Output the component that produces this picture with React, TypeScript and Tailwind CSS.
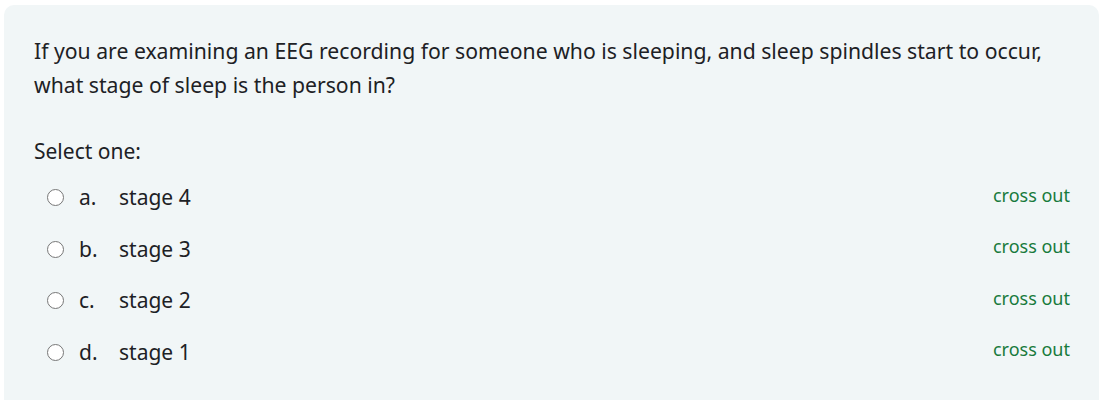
import React from "react";

const options = [
  { letter: "a.", text: "stage 4" },
  { letter: "b.", text: "stage 3" },
  { letter: "c.", text: "stage 2" },
  { letter: "d.", text: "stage 1" },
];

export default function App() {
  return (
    <div
      className="w-[1101px] h-[400px] overflow-hidden bg-white pt-[5px] pl-[4px] pr-[2px]"
      style={{ fontFamily: '"Noto Sans", "Open Sans", sans-serif' }}
    >
      <div className="bg-[#f1f6f7] rounded-[10px] px-[30px] pt-[29px] pb-[40px] text-[#1d2125]">
        <p className="text-[21.2px] leading-[34px]">
          If you are examining an EEG recording for someone who is sleeping, and sleep spindles start to occur,
          <br />
          what stage of sleep is the person in?
        </p>
        <p className="mt-[32px] text-[21px] leading-[34px]">Select one:</p>
        <div className="mt-[4px] flex flex-col">
          {options.map((o) => (
            <div key={o.letter} className="flex items-center h-[51.5px]">
              <span className="ml-[13px] w-[17px] h-[17px] rounded-full border-[1.5px] border-[#777777] bg-white shrink-0" />
              <span className="ml-[15px] w-[40px] text-[21px]">{o.letter}</span>
              <span className="text-[21px]">{o.text}</span>
              <span className="ml-auto mr-[-1px] -mt-[5px] text-[18px] text-[#187a3c]">cross out</span>
            </div>
          ))}
        </div>
      </div>
    </div>
  );
}
